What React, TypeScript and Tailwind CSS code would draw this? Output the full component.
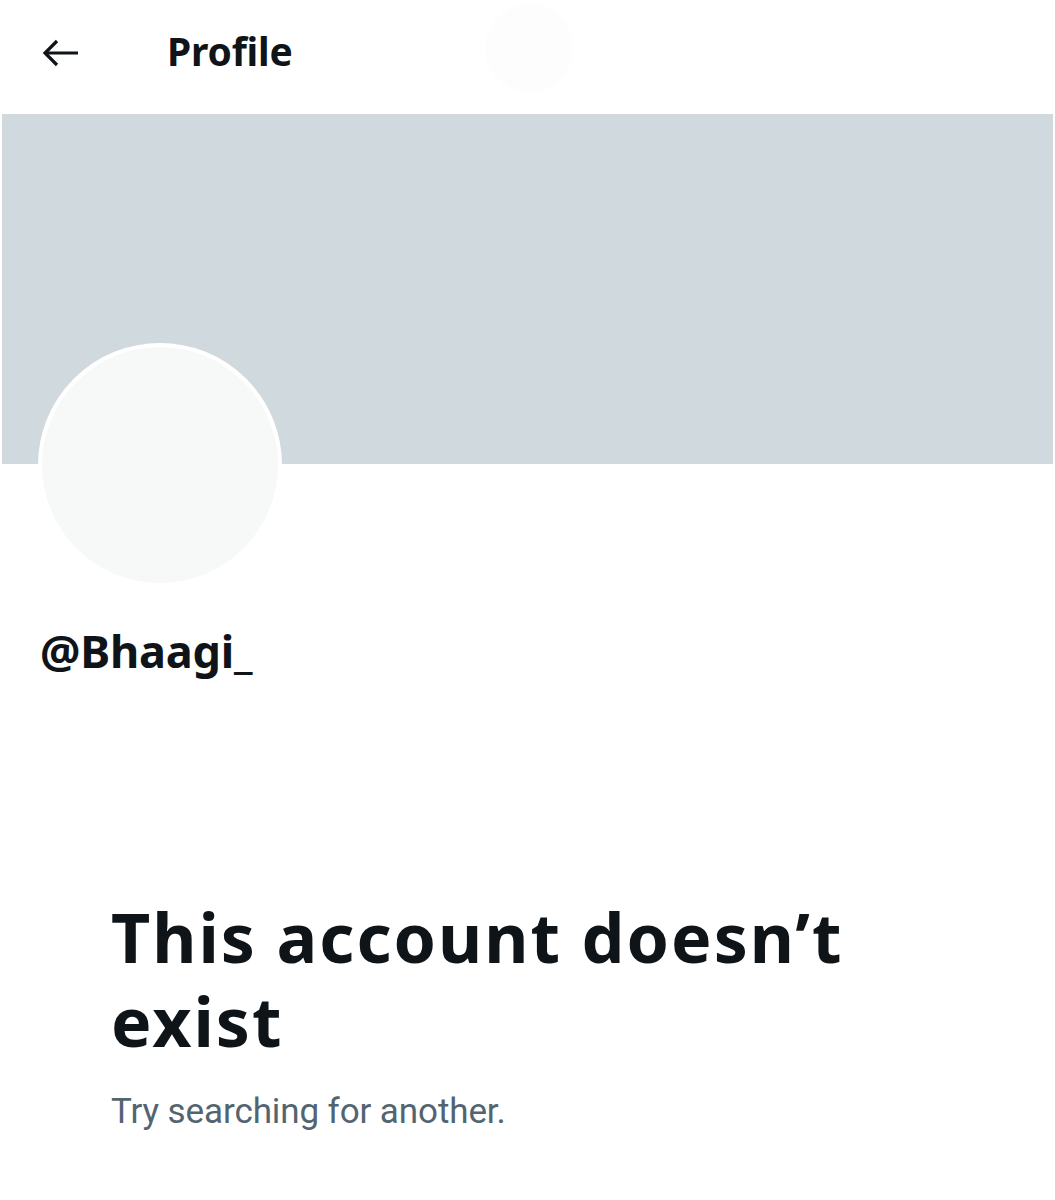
import React from "react";

export default function App() {
  return (
    <div className="relative w-[1055px] h-[1200px] bg-white overflow-hidden" style={{ fontFamily: '"Noto Sans", "Open Sans", sans-serif' }}>
      {/* faint centered circle in header */}
      <div className="absolute left-[485px] top-[4px] w-[88px] h-[88px] rounded-full bg-[#fdfdfd]" />
      {/* header */}
      <div className="relative flex items-center h-[114px] pb-[10px] pl-[42px]">
        <svg width="36" height="28" viewBox="0 0 36 28" fill="none" stroke="#0f1419" strokeWidth="3.2" strokeLinecap="butt" strokeLinejoin="miter" className="mt-[2px]">
          <path d="M36 14H3" />
          <path d="M15 2L3 14l12 12" />
        </svg>
        <div className="ml-[89px] -mt-[4px] text-[39px] font-bold text-[#0f1419] leading-none tracking-[-0.2px]">Profile</div>
      </div>
      {/* banner */}
      <div className="ml-[2px] mr-[2px] h-[350px] bg-[#cfd9de]" />
      {/* avatar */}
      <div className="relative px-[38px] -mt-[121px]">
        <div className="w-[244px] h-[244px] rounded-full bg-[#f7f9f9] border-[4px] border-white" />
      </div>
      {/* handle */}
      <div className="pl-[40px] mt-[34px] text-[45px] font-bold text-[#0f1419] leading-[60px] tracking-[-0.2px]">@Bhaagi_</div>
      {/* empty state */}
      <div className="pl-[111px] mt-[214px]">
        <div className="text-[68px] font-bold text-[#0f1419] leading-[84px] tracking-[2px]">
          This account doesn’t
          <br />
          exist
        </div>
        <div className="mt-[26px] text-[35px] text-[#536471] leading-[46px] tracking-[-0.1px]" style={{ fontFamily: 'Roboto, "Noto Sans", sans-serif' }}>
          Try searching for another.
        </div>
      </div>
    </div>
  );
}
